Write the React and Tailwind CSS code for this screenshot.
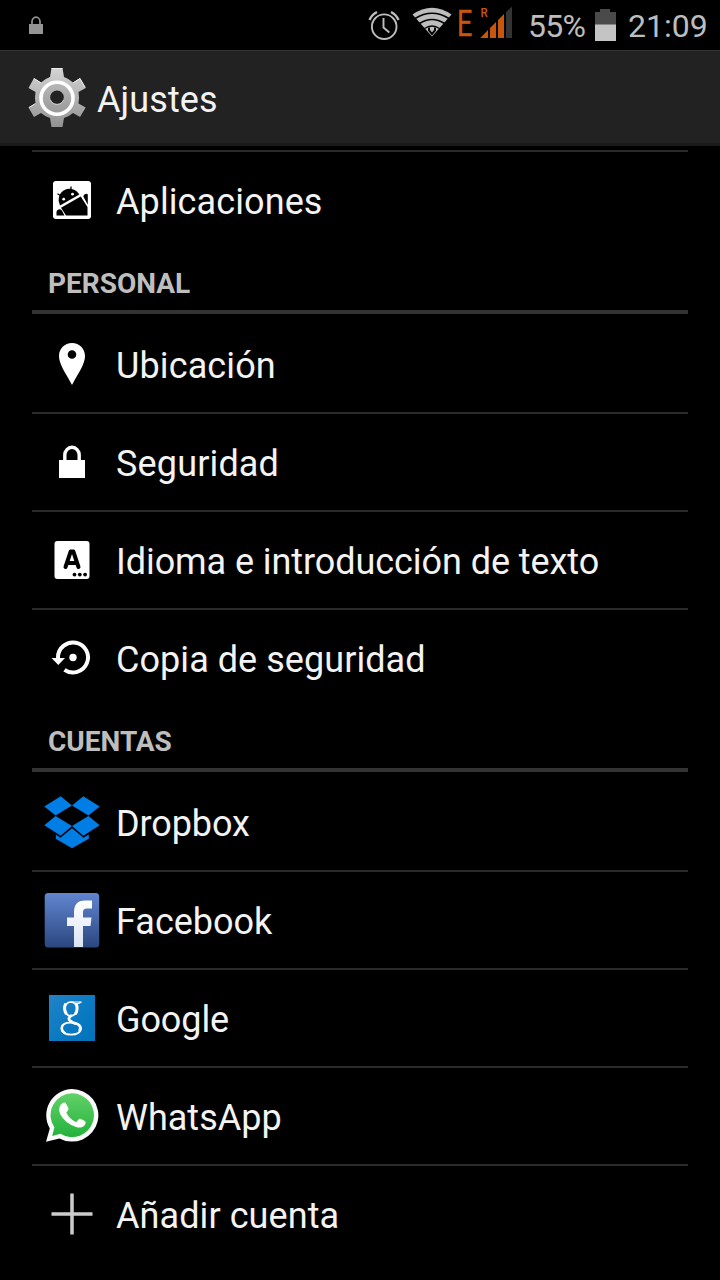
import React from "react";

function StatusBar() {
  return (
    <div className="flex h-[50px] items-center justify-between bg-black pl-[28px] pr-[12px]">
      <svg width="16" height="20" viewBox="0 0 16 20" className="mt-[1px]">
        <path d="M1 8h14v10H1z" fill="#949494" />
        <path d="M4 9V5.500a4 4.300 0 0 1 8 0V9" fill="none" stroke="#949494" strokeWidth="1.700" />
      </svg>
      <div className="flex h-[50px] items-center font-['Roboto',sans-serif] text-[31px] text-[#bdbdbd]">
        <svg width="152" height="50" viewBox="364 0 152 50">
          <g fill="none" stroke="#bdbdbd">
            <circle cx="384.200" cy="26.700" r="12.300" strokeWidth="1.900" />
            <path d="M383.500 18v9.500l5.800 5" strokeWidth="1.900" />
            <path d="M369.500 20a16 16 0 0 1 7.500-8M391 12a16 16 0 0 1 7.500 8" strokeWidth="2.400" />
          </g>
          <path d="M412.500 14.500Q432 1 451.500 14.500L432 36.500z" fill="#bdbdbd" />
          <g fill="none" stroke="#000">
            <path d="M415 18.500Q432 8 449 18.500" strokeWidth="1.600" />
            <path d="M419.500 23.500Q432 15.500 444.500 23.500" strokeWidth="1.600" />
            <path d="M424.500 28.500Q432 23.500 439.500 28.500" strokeWidth="1.400" />
            <path d="M429 27.500v3l3 3.500 3-3.500v-3" strokeWidth="2" />
          </g>
          <text transform="translate(457 36.300) scale(.72 1)" fontSize="37.500" fill="#c8560d" stroke="#c8560d" strokeWidth=".4">E</text>
          <text transform="translate(480.500 16.800) scale(.85 1)" fontSize="13.500" fontWeight="500" fill="#c8560d">R</text>
          <path d="M480.300 38l7.700-8v8zM490 38V28l6-6V38zM498 38V20l6-6V38z" fill="#c8560d" />
          <path d="M506 38V12l6-5.500V38z" fill="#333" />
        </svg>
        <span className="ml-[12px] w-[61px] whitespace-nowrap pt-[2px] text-[32px] tracking-[-0.7px]">55%</span>
        <svg width="21" height="32" viewBox="0 0 21 32" className="ml-[6px]">
          <path d="M0 3h5V0h10v3h6v13H0z" fill="#4a4a4a" />
          <path d="M0 15.500h21V32H0z" fill="#c4c4c4" />
        </svg>
        <span className="ml-[12px] w-[80px] whitespace-nowrap pt-[2px] text-[32px]">21:09</span>
      </div>
    </div>
  );
}

function GearIcon() {
  return (
    <svg width="60" height="62" viewBox="27 66 60 62">
      <defs>
        <linearGradient id="gear" gradientUnits="userSpaceOnUse" x1="0" y1="68" x2="0" y2="127">
          <stop offset="0" stopColor="#d4d4d4" />
          <stop offset="1" stopColor="#929292" />
        </linearGradient>
        <linearGradient id="hub" x1="0" y1="0" x2="0" y2="1">
          <stop offset="0" stopColor="#b8b8b8" />
          <stop offset="1" stopColor="#999" />
        </linearGradient>
      </defs>
      <path
        fill="url(#gear)"
        d="M51.500 68H62.500L64 77Q69.500 79 73 82.500L80 78L85.700 88L78.500 92Q79.500 97.500 78.500 103.500L85.700 107.500L80 117L73 113Q69 116.500 64 118L62.500 127H51.500L50 118Q45 116.500 41 113L34 117L28.500 107.500L35.500 103.500Q34.500 97.500 35.500 92L28.500 88L34 78L41 82.500Q44.500 79 50 77z"
      />
      <path d="M51.500 68.500H62.500M34 78.500L41 83M73 83L80 78.500M80 78.500L85.300 87.500M29 107.500L35.500 103.500" stroke="#ededed" strokeWidth="1" fill="none" />
      <circle cx="57" cy="98.200" r="16" fill="url(#hub)" stroke="#fff" strokeWidth="3.600" />
      <circle cx="57" cy="97.300" r="6.800" fill="#222" />
      <path d="M50.500 100a7 7 0 0 0 13 0" stroke="#ccc" strokeWidth="1" fill="none" />
    </svg>
  );
}

const icons = {
  apps: (
    <svg width="64" height="64" viewBox="40 168 64 64">
      <rect x="53" y="181" width="38" height="38" rx="3" fill="#fff" />
      <path d="M60 205.500A11 11 0 0 1 79.300 194.500z" fill="#000" />
      <path d="M61 207.800L80.700 196.500L87.500 207V215.500H66z" fill="#000" />
      <path d="M71 191v-4.500M62 196.500l-4.500-2.700" stroke="#000" strokeWidth="1.300" />
      <path d="M56.500 215.500v-3.500q.5-2.800 3.300-2.800 1.500 0 2.200 1.500l2.500 4.800zM83.300 196.500q.5-2.700 3-2.800l1.500.5v10.500z" fill="#000" />
      <circle cx="63.700" cy="199.200" r="1.400" fill="#fff" />
      <circle cx="72.500" cy="194.200" r="1.400" fill="#fff" />
    </svg>
  ),
  pin: (
    <svg width="64" height="64" viewBox="40 332 64 64">
      <path fillRule="evenodd" fill="#fff" d="M72 343c-7.500 0-13 5.800-13 13 0 8 6 16 13 29 7-13 13-21 13-29 0-7.200-5.500-13-13-13zm0 7.200a4.300 4.300 0 1 1 0 8.600 4.300 4.300 0 0 1 0-8.600z" />
    </svg>
  ),
  lock: (
    <svg width="64" height="64" viewBox="40 430 64 64">
      <path d="M59 460h26v18H59z" fill="#fff" />
      <path d="M64.800 461v-6a7.200 7.700 0 0 1 14.400 0v6" fill="none" stroke="#fff" strokeWidth="3.400" />
    </svg>
  ),
  language: (
    <svg width="64" height="64" viewBox="40 528 64 64">
      <rect x="54.500" y="541" width="35" height="38" rx="3" fill="#fff" />
      <path d="M65.500 567L70.700 551.500h2.600L78.500 567M67.300 563h9.400" fill="none" stroke="#000" strokeWidth="4" strokeLinecap="round" strokeLinejoin="round" />
      <circle cx="74.500" cy="574.600" r="1.900" fill="#000" />
      <circle cx="79.800" cy="574.600" r="1.900" fill="#000" />
      <circle cx="85.100" cy="574.600" r="1.900" fill="#000" />
    </svg>
  ),
  backup: (
    <svg width="64" height="64" viewBox="40 626 64 64">
      <path d="M58 659.500V657.500A15 15 0 1 1 64.500 669.800" fill="none" stroke="#fff" strokeWidth="4" />
      <path d="M51.500 658h13.500l-6.700 7z" fill="#fff" />
      <circle cx="73" cy="657.500" r="3.700" fill="#fff" />
    </svg>
  ),
  dropbox: (
    <svg width="64" height="64" viewBox="40 790 64 64">
      <path fill="#007ee5" d="M60.700 796.300L72 805.500 55.600 815.600 44.300 806.600zM83.300 796.300L99.700 806.600 88.400 815.600 72 805.500zM44.300 825.200L55.600 816 72 826 60.700 835.700zM88.400 816L99.700 825.200 83.300 835.700 72 826zM72 828.200L83.600 837.700 88.800 834.500V838.700L72 848.200 55.800 838.700V834.500L60.500 837.700z" />
    </svg>
  ),
  facebook: (
    <svg width="64" height="64" viewBox="40 888 64 64">
      <defs>
        <linearGradient id="fb" x1="0" y1="0" x2="0" y2="1">
          <stop offset="0" stopColor="#6185cf" />
          <stop offset="1" stopColor="#2b477f" />
        </linearGradient>
        <linearGradient id="fbmark" x1="0" y1="0" x2="0" y2="1">
          <stop offset="0" stopColor="#fff" />
          <stop offset="1" stopColor="#dbe3f3" />
        </linearGradient>
      </defs>
      <rect x="44.700" y="893" width="54.500" height="54.500" rx="3.500" fill="url(#fb)" />
      <path fill="url(#fbmark)" d="M74 947V926H67V917.500H74V912Q74 900.500 85 900.500H92V908.500H87Q83 908.500 83 912V917.500H91.500L90.500 926H83V947z" />
    </svg>
  ),
  google: (
    <svg width="64" height="64" viewBox="40 986 64 64">
      <defs>
        <linearGradient id="goo" x1="0" y1="0" x2="1" y2="1">
          <stop offset="0" stopColor="#2482c5" />
          <stop offset=".5" stopColor="#0b7bc3" />
          <stop offset="1" stopColor="#0073bb" />
        </linearGradient>
      </defs>
      <rect x="49" y="995" width="46" height="46" fill="url(#goo)" />
      <g fill="none" stroke="#fff" strokeLinecap="round">
        <ellipse cx="70.800" cy="1009" rx="6.300" ry="6.900" strokeWidth="1.500" />
        <path d="M65.300 1004.500q-1.800 4.500.8 9M76.500 1004.500q1.500 5-.8 9" strokeWidth="3" />
        <path d="M71 1002h10.500l-2.800 1.500h-4" strokeWidth="1.200" />
        <path d="M71 1015.800q-3.500 2.500-1 4.800 2 1.500 5 3" strokeWidth="2.800" />
        <path d="M72.500 1022.800c-7-.8-11 1.700-11 5.800 0 4 4.300 6 9.500 6 6 0 10-2.500 10-6.500 0-2.500-2-4.300-5.800-5.300" strokeWidth="1.900" />
        <path d="M62.300 1026q-1.500 4.500 2.500 7M77 1024q4.500 2.500 2.500 6" strokeWidth="2.300" />
      </g>
    </svg>
  ),
  whatsapp: (
    <svg width="64" height="64" viewBox="40 1084 64 64">
      <defs>
        <linearGradient id="wa" x1="0" y1="0" x2="0" y2="1">
          <stop offset="0" stopColor="#62d167" />
          <stop offset="1" stopColor="#24b23d" />
        </linearGradient>
      </defs>
      <path fill="#fafafa" d="M72 1089a26.300 26.300 0 1 1-12.500 49.400L46 1141.700l3.800-13.200A26.300 26.300 0 0 1 72 1089z" />
      <path fill="url(#wa)" d="M72.200 1093.300a21.900 21.900 0 1 1-11.700 40.500l-8.300 2.300 2.200-8.500a21.900 21.900 0 0 1 17.800-34.300z" />
      <path fill="#fff" d="M60.500 1105q2.300-3.300 5-2.300l3 5.500q.5 2-2.200 4.500 3.300 6.300 9.700 9.500l3-3.300q1.200-1 6.400 2.500.7 1-.3 3-3 4.600-9 2.500-11.500-4-16-13-2-5 .4-8.900z" />
    </svg>
  ),
  plus: (
    <svg width="64" height="64" viewBox="40 1182 64 64">
      <path d="M51.500 1214h41M72 1193.500v41" stroke="#ccc" strokeWidth="3.500" />
    </svg>
  ),
};

function Row({ icon, label, spacing = "", last = false }) {
  return (
    <div className={"mx-8 flex items-center pl-2 " + (last ? "h-[96px]" : "h-[98px] border-b-2 border-[#2a2a2a]")}>
      {icons[icon]}
      <span className={"ml-[12px] whitespace-nowrap pt-[3px] text-[36px] leading-[42px] text-[#f3f3f3] " + spacing}>{label}</span>
    </div>
  );
}

function Section({ title }) {
  return (
    <div className="mx-8 mb-[2px] flex h-[66px] items-end border-b-4 border-[#333] pl-4">
      <h2 className="pb-[10px] text-[28px] font-bold leading-[33px] text-[#bebebe]">{title}</h2>
    </div>
  );
}

export default function App() {
  return (
    <main className="h-[1280px] w-[720px] overflow-hidden bg-black font-['Roboto',sans-serif]">
      <StatusBar />
      <header className="flex h-[96px] items-center border-b-[3px] border-t border-b-[#1a1a1a] border-t-[#333] bg-[#222] pl-[27px]">
        <GearIcon />
        <h1 className="ml-[10px] pt-[5px] text-[36px] leading-[42px] tracking-[0.1px] text-[#f3f3f3]">Ajustes</h1>
      </header>
      <div className="mx-8 mt-1 h-[2px] bg-[#2a2a2a]" />
      <Row icon="apps" label="Aplicaciones" spacing="tracking-[0.1px]" last />
      <Section title="PERSONAL" />
      <Row icon="pin" label="Ubicación" spacing="tracking-[0.12px]" />
      <Row icon="lock" label="Seguridad" spacing="tracking-[0.15px]" />
      <Row icon="language" label="Idioma e introducción de texto" spacing="tracking-[-0.07px]" />
      <Row icon="backup" label="Copia de seguridad" spacing="tracking-[0.05px]" last />
      <Section title="CUENTAS" />
      <Row icon="dropbox" label="Dropbox" spacing="tracking-[-0.1px]" />
      <Row icon="facebook" label="Facebook" />
      <Row icon="google" label="Google" spacing="tracking-[-0.1px]" />
      <Row icon="whatsapp" label="WhatsApp" />
      <Row icon="plus" label="Añadir cuenta" spacing="tracking-[0.08px]" last />
    </main>
  );
}
